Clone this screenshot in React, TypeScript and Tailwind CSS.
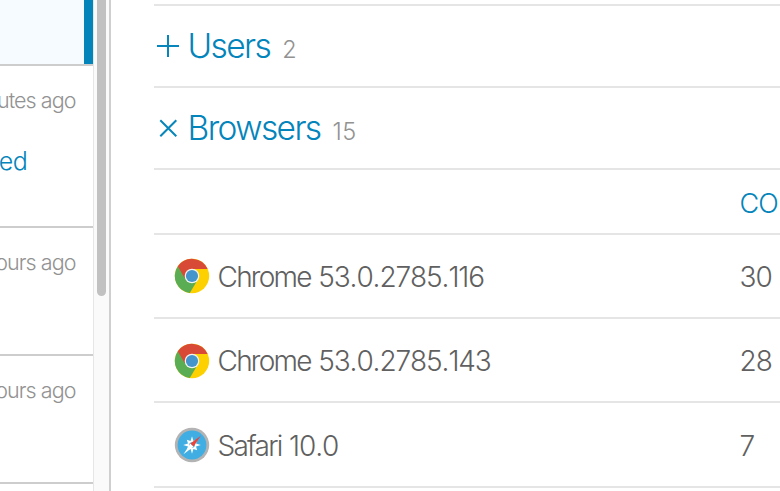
import type { ReactNode } from "react";

function ChromeIcon() {
  return (
    <svg viewBox="0 0 36 36" className="h-9 w-9 shrink-0">
      <circle cx="18" cy="18" r="17.2" fill="#fdd000" />
      <path d="M18 18 L3.8 8.3 A17.2 17.2 0 0 0 15.8 35.1 L23.5 22 Z" fill="#5aad52" />
      <path d="M3.8 8.3 A17.2 17.2 0 0 1 33.7 11 H18 L10.6 20 Z" fill="#d94a36" />
      <circle cx="18" cy="18" r="7.3" fill="#f4f4f0" />
      <circle cx="18" cy="18" r="6.1" fill="#4495cc" />
    </svg>
  );
}

function SafariIcon() {
  return (
    <svg viewBox="0 0 36 36" className="h-9 w-9 shrink-0">
      <circle cx="18" cy="18" r="17.2" fill="#b3b3b3" />
      <circle cx="18" cy="18" r="14.4" fill="#40aee3" />
      <path
        d="M18 9.2 L19.4 14 L23.2 12.8 L22 16.6 L26.8 18 L22 19.4 L23.2 23.2 L19.4 22 L18 26.8 L16.6 22 L12.8 23.2 L14 19.4 L9.2 18 L14 16.6 L12.8 12.8 L16.6 14 Z"
        fill="#fff"
      />
      <circle cx="18" cy="18" r="2.8" fill="#40aee3" />
      <path d="M9.5 27.3 L16.4 16.4 L19.6 19.6 Z" fill="#fff" />
      <path d="M26.8 8.8 L16.4 16.4 L19.6 19.6 Z" fill="#e8443a" />
    </svg>
  );
}

function Ago({ text }: { text: string }) {
  return (
    <div className="flex h-7 w-[75.5px] justify-end whitespace-nowrap text-[21.5px] leading-7 tracking-[-0.95px] text-[#929292]">
      {text}
    </div>
  );
}

function Section({ icon, title, count }: { icon: ReactNode; title: string; count: string }) {
  return (
    <div className="flex h-[82px] items-center border-b-2 border-[#e5e5e5] pt-0.5">
      <svg viewBox="0 0 28 28" className="mr-[5.5px] h-7 w-7 shrink-0" fill="none" stroke="#0686ba" strokeWidth="2">
        {icon}
      </svg>
      <div className="flex items-baseline">
        <span className="text-[33.5px] tracking-[-1.6px] text-[#0384bb]">{title}</span>
        <span className="ml-3 text-[23.5px] tracking-[0.4px] text-[#929292]">{count}</span>
      </div>
    </div>
  );
}

function Row({ icon, name, version, count }: { icon: ReactNode; name: string; version: string; count: string }) {
  return (
    <div className="flex h-[84.4px] items-center border-b-2 border-[#e5e5e5] pt-px text-[28px] text-[#606060]">
      <div className="flex w-[585.5px] items-center pl-5">
        {icon}
        <span className="ml-[7.5px] pt-px tracking-[-1.75px]">{name}</span>
        <span className="ml-[7.5px] pt-px tracking-[-1.1px] [font-kerning:none]">{version}</span>
      </div>
      <span className="pt-px tracking-[-1px]">{count}</span>
    </div>
  );
}

export default function App() {
  return (
    <div className="flex h-[491px] w-[780px] overflow-hidden bg-white font-['Inter',sans-serif] font-[350]">
      <aside className="w-[93px] shrink-0 overflow-hidden">
        <div className="h-[66px] border-b-2 border-[#cdcdcd] bg-[#f6fbff]">
          <div className="ml-auto h-full w-[9px] bg-[#0384bb]" />
        </div>
        <div className="h-[162px] border-b-2 border-[#cdcdcd] pt-5">
          <Ago text="utes ago" />
          <div className="mt-[31px] flex h-8 w-[27px] justify-end text-[25px] leading-8 tracking-[-0.7px] text-[#0384bb]">
            ed
          </div>
        </div>
        <div className="h-[128.4px] border-b-2 border-[#cdcdcd] pt-5">
          <Ago text="ours ago" />
        </div>
        <div className="h-[128px] border-b-2 border-[#cdcdcd] pt-5">
          <Ago text="ours ago" />
        </div>
      </aside>
      <div className="w-4 shrink-0 border-l border-[#e6e6e6] bg-[#fafafa] pl-[3px]">
        <div className="h-[296px] w-[9px] rounded-b-full bg-[#c1c1c1]" />
      </div>
      <div className="w-0.5 shrink-0 bg-[#cfcfcf]" />
      <main className="ml-[43px] w-[626px] shrink-0 overflow-hidden">
        <div className="h-[5.5px] border-b-2 border-[#e5e5e5]" />
        <Section title="Users" count="2" icon={<path d="M3 13H25M14 2V24" />} />
        <Section title="Browsers" count="15" icon={<path d="M6.3 5.3L22.3 21.3M22.3 5.3L6.3 21.3" />} />
        <div className="flex h-[65.2px] items-center border-b-2 border-[#e5e5e5] pl-[585.5px] pt-[6px] text-[27px] tracking-[-1px] text-[#0384bb]">
          CO
        </div>
        <Row icon={<ChromeIcon />} name="Chrome" version="53.0.2785.116" count="30" />
        <Row icon={<ChromeIcon />} name="Chrome" version="53.0.2785.143" count="28" />
        <Row icon={<SafariIcon />} name="Safari" version="10.0" count="7" />
      </main>
    </div>
  );
}
